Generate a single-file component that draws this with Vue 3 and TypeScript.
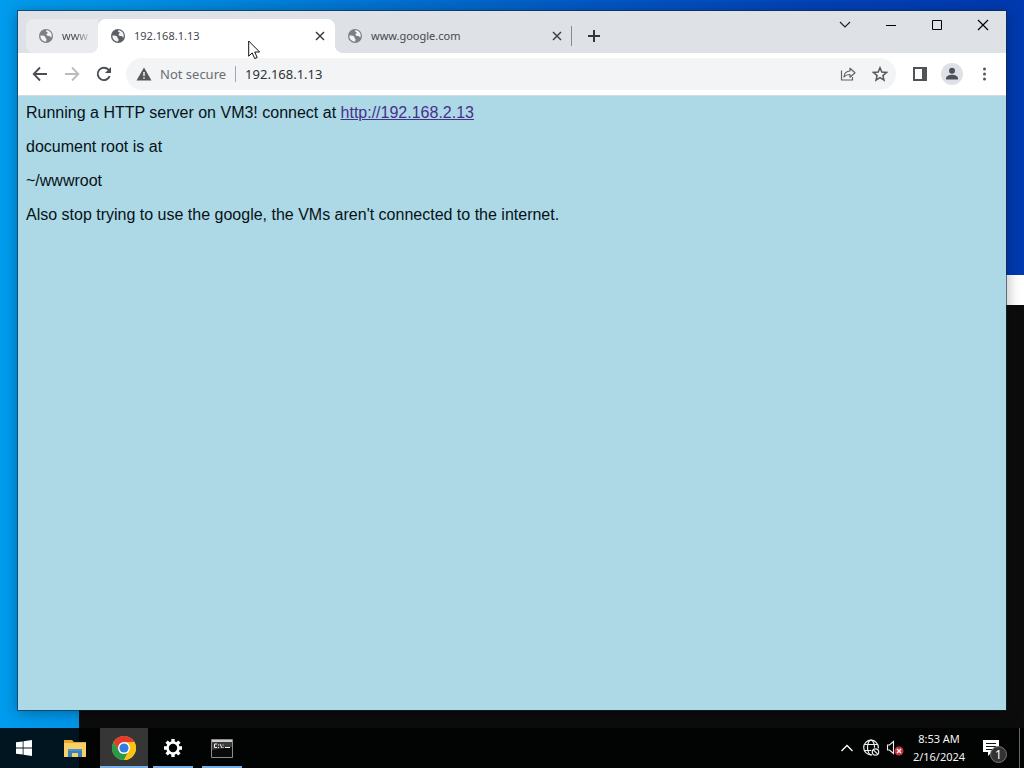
<script setup lang="ts">
import { ref } from 'vue'

interface Tab {
  id: string
  title: string
  kind: 'pinned' | 'active' | 'idle'
}

const tabs: Tab[] = [
  { id: 'a', title: 'www', kind: 'pinned' },
  { id: 'b', title: '192.168.1.13', kind: 'active' },
  { id: 'c', title: 'www.google.com', kind: 'idle' },
]
const address = ref('192.168.1.13')
</script>

<template>
  <div class="screen">
    <main class="desktop">
      <section class="terminal" aria-label="Terminal">
        <div class="terminal-title"></div>
      </section>

      <section class="browser" aria-label="Browser">
        <header class="tabstrip">
          <div class="tabs">
            <div v-for="tab in tabs" :key="tab.id" class="tab" :class="tab.kind">
              <svg class="globe" viewBox="0 0 16 16" width="16" height="16" aria-hidden="true">
                <circle cx="8" cy="8" r="7" fill="currentColor" />
                <path class="land" d="M2.400 7.600c1.800-.2 3.500 0 4.400.7.900.8.3 1.700 1.200 2.100.8.4.6 1.500.1 3.200-3.400.1-5.900-2.400-5.700-6zM8.700 2.300c2 .2 3.800 1.600 4.600 3.300.5 1.300.5 2.800.1 4-.9-.1-1.100-1.300-2-1.500-1.200-.2-3-.4-2.900-1.700.1-.9 1.300-.8 1.200-1.700-.1-.7-1.300-.5-1.700-1.100-.2-.4.1-1.100.7-1.300z" />
              </svg>
              <span class="tab-title">{{ tab.title }}</span>
              <button v-if="tab.kind !== 'pinned'" class="tab-close" aria-label="Close tab">
                <svg viewBox="0 0 10 10" width="10" height="10"><path d="M1 1l8 8M9 1L1 9" stroke="currentColor" stroke-width="1.500" fill="none" /></svg>
              </button>
            </div>
            <button class="new-tab" aria-label="New tab">
              <svg viewBox="0 0 14 14" width="14" height="14"><path d="M7 1v12M1 7h12" stroke="#333639" stroke-width="2" /></svg>
            </button>
          </div>
          <div class="window-buttons">
            <button aria-label="Search tabs"><svg viewBox="0 0 12 12" width="12" height="12"><path d="M1 3l5 5 5-5" fill="none" stroke="#222" stroke-width="1.200" /></svg></button>
            <button aria-label="Minimize"><svg viewBox="0 0 12 12" width="12" height="12"><path d="M1 6.500h10" stroke="#000" /></svg></button>
            <button aria-label="Maximize"><svg viewBox="0 0 12 12" width="12" height="12"><path d="M1.500 1.500h9v9h-9z" fill="none" stroke="#000" /></svg></button>
            <button aria-label="Close"><svg viewBox="0 0 12 12" width="12" height="12"><path d="M1 1l10 10M11 1L1 11" fill="none" stroke="#000" stroke-width="1.200" /></svg></button>
          </div>
        </header>

        <div class="toolbar">
          <button class="tool" aria-label="Back"><svg viewBox="0 0 16 16" width="16" height="16"><path d="M15 8H2M8 1.500L1.700 8 8 14.500" fill="none" stroke="#4b4f53" stroke-width="1.800" /></svg></button>
          <button class="tool" aria-label="Forward"><svg viewBox="0 0 16 16" width="16" height="16"><path d="M1 8h13M8 1.500L14.300 8 8 14.500" fill="none" stroke="#b9bbbe" stroke-width="1.800" /></svg></button>
          <button class="tool" aria-label="Reload"><svg viewBox="0 0 16 16" width="16" height="16"><path d="M13.700 10.200A6.200 6.200 0 1 1 12.500 3.700L14 5.200" fill="none" stroke="#4b4f53" stroke-width="1.900" /><path d="M15 1v6H9z" fill="#4b4f53" /></svg></button>
          <div class="omnibox">
            <svg viewBox="0 0 16 14" width="16" height="14" aria-hidden="true"><path d="M8 .5L15.500 13.500H.5z" fill="#54585c" /><path d="M8 5v4M8 10.200v1.600" stroke="#f1f3f4" stroke-width="1.500" /></svg>
            <span class="insecure">Not secure</span>
            <input v-model="address" class="address" type="text" aria-label="Address" />
            <button class="tool" aria-label="Share"><svg viewBox="0 0 16 16" width="16" height="16"><path d="M1.500 4.500v9.500h11v-3" fill="none" stroke="#5f6368" stroke-width="1.200" /><path d="M4 11c.3-4 2.600-5.900 6-6V2.200L15 6.700l-5 4.500V8.500C7.400 8.400 5.400 9.200 4 11z" fill="none" stroke="#5f6368" stroke-width="1.200" stroke-linejoin="round" /></svg></button>
            <button class="tool" aria-label="Bookmark"><svg viewBox="0 0 16 16" width="16" height="16"><path d="M8 1.800l1.800 4.300 4.700.4-3.600 3.100 1.100 4.600L8 11.700l-4 2.500 1.100-4.600L1.500 6.500l4.700-.4z" fill="none" stroke="#54585c" stroke-width="1.500" /></svg></button>
          </div>
          <button class="tool" aria-label="Side panel"><svg viewBox="0 0 16 16" width="16" height="16"><path d="M2 2h12v12H2z" fill="none" stroke="#505458" stroke-width="2" /><path d="M10 2h5v12h-5z" fill="#505458" /></svg></button>
          <button class="tool" aria-label="Profile"><svg viewBox="0 0 22 22" width="22" height="22"><circle cx="11" cy="11" r="11" fill="#dfe1e6" /><circle cx="11" cy="7.800" r="3" fill="#4d525a" /><path d="M5 16.500v-1.200c0-2.200 3.200-3.500 6-3.500s6 1.300 6 3.500v1.200z" fill="#4d525a" /></svg></button>
          <button class="tool" aria-label="Menu"><svg viewBox="0 0 16 16" width="16" height="16"><circle cx="8.500" cy="3" r="1.500" fill="#54585c" /><circle cx="8.500" cy="8" r="1.500" fill="#54585c" /><circle cx="8.500" cy="13" r="1.500" fill="#54585c" /></svg></button>
        </div>

        <article class="page">
          <p>Running a HTTP server on VM3! connect at <a href="http://192.168.2.13">http://192.168.2.13</a></p>
          <p>document root is at</p>
          <p>~/wwwroot</p>
          <p>Also stop trying to use the google, the VMs aren't connected to the internet.</p>
        </article>
      </section>

      <svg class="cursor" viewBox="0 0 13 20" width="13" height="20" aria-hidden="true">
        <path d="M.7 1v15.200l3.500-3.300 2.500 5.700 2.500-1.100-2.500-5.500h4.900z" fill="#fff" stroke="#111" />
      </svg>
    </main>

    <footer class="taskbar">
      <button class="start" aria-label="Start">
        <svg viewBox="0 0 16 16" width="16" height="16"><path d="M0 2.300L6.700 1.400v6.200H0zM7.500 1.300L16 0v7.600H7.500zM0 8.400h6.700v6.200L0 13.700zM7.500 8.400H16V16l-8.500-1.200z" fill="#fff" /></svg>
      </button>
      <button class="task" aria-label="File Explorer">
        <svg viewBox="0 0 22 19" width="22" height="19"><path d="M0 1h8l2 2h12v14H0z" fill="#e8a92e" /><path d="M0 4h22v14H0z" fill="#f8d069" /><path d="M4 10h14v8h-4v-4H8v4H4z" fill="#3a80be" /><path d="M4 10h14v2H4z" fill="#4a92cc" /></svg>
      </button>
      <button class="task current" aria-label="Chrome">
        <svg viewBox="0 0 24 24" width="24" height="24"><circle cx="12" cy="12" r="12" fill="#fbc116" /><path d="M12 12L6.800 15 1.600 6A12 12 0 0 1 22.400 6H12z" fill="#e33b2e" /><path d="M1.600 6l5.200 9A6 6 0 0 0 12 18l3.500-1.200L12 24A12 12 0 0 1 1.600 6z" fill="#26994a" /><path d="M22.400 6H12a6 6 0 0 1 5.200 9L12 24A12 12 0 0 0 22.400 6z" fill="#fbc116" /><circle cx="12" cy="12" r="6" fill="#fff" /><circle cx="12" cy="12" r="4.600" fill="#2f7de0" /></svg>
      </button>
      <button class="task running" aria-label="Settings">
        <svg viewBox="0 0 20 20" width="20" height="20"><circle cx="10" cy="10" r="5.500" fill="none" stroke="#fff" stroke-width="2.600" /><g stroke="#fff" stroke-width="3.400"><path d="M10 1v3M10 16v3M1 10h3M16 10h3M3.600 3.600l2.200 2.200M14.200 14.200l2.200 2.200M3.600 16.400l2.200-2.200M14.200 5.800l2.200-2.200" /></g></svg>
      </button>
      <button class="task running" aria-label="Command Prompt">
        <svg viewBox="0 0 22 19" width="22" height="19"><path d="M.5 .5h21v18H.5z" fill="#0b0b0b" stroke="#8d8d8d" /><path d="M1 1h20v2H1z" fill="#cfcfcf" /><path d="M1 3h20v5L1 11z" fill="#3b3b3b" /><path d="M6 5H3.500v3.500H6M7.500 5.500v1M7.500 8v1M9 5l2 4M12 5.500v1M12 8v1M14 8.500h5" fill="none" stroke="#f2f2f2" /></svg>
      </button>

      <div class="tray">
        <button class="tray-icon" aria-label="Show hidden icons"><svg viewBox="0 0 14 10" width="14" height="10"><path d="M1.500 8L7 2.500 12.500 8" fill="none" stroke="#fff" stroke-width="1.300" /></svg></button>
        <button class="tray-icon" aria-label="Network"><svg viewBox="0 0 18 18" width="18" height="18"><g fill="none" stroke="#eee" stroke-width="1.200"><circle cx="9" cy="8.500" r="7.300" /><ellipse cx="9" cy="8.500" rx="3.500" ry="7.300" /><path d="M2.500 5.500h13M2.500 11.500h13" /></g><circle cx="13.500" cy="13" r="4.500" fill="#050505" /><circle cx="13.500" cy="13" r="3.200" fill="none" stroke="#eee" stroke-width="1.200" /><path d="M11.300 10.800l4.400 4.400" stroke="#eee" stroke-width="1.200" /></svg></button>
        <button class="tray-icon" aria-label="Volume muted"><svg viewBox="0 0 18 18" width="18" height="18"><path d="M1.500 6h2l4-3.500v12l-4-3.500h-2z" fill="none" stroke="#eee" stroke-width="1.100" /><circle cx="13" cy="12" r="4.500" fill="#c8323c" /><path d="M11 10l4 4M15 10l-4 4" stroke="#fff" stroke-width="1.200" /></svg></button>
        <button class="clock"><span>8:53 AM</span><span>2/16/2024</span></button>
        <button class="notices" aria-label="Notifications">
          <svg viewBox="0 0 16 16" width="16" height="16"><path d="M0 0h16v12H9l-4 4v-4H0z" fill="#fff" /><path d="M3 3.500h10M3 6.500h10M3 9.500h6" stroke="#111" /></svg>
          <span class="count">1</span>
        </button>
        <button class="peek" aria-label="Show desktop"></button>
      </div>
    </footer>
  </div>
</template>

<style>
html,
body {
  margin: 0;
  overflow: hidden;
}
</style>

<style scoped>
.screen {
  display: flex;
  flex-direction: column;
  height: 100vh;
  font-family: "Noto Sans", "Open Sans", sans-serif;
  background: linear-gradient(90deg, #009cee 0%, #0092e6 12%, #007cd8 30%, #0058c4 58%, #0042b8 80%, #0039b0 100%);
}
button {
  display: flex;
  align-items: center;
  justify-content: center;
  flex: none;
  margin: 0;
  padding: 0;
  border: 0;
  background: none;
  font-family: inherit;
}
svg {
  display: block;
  flex: none;
}
.desktop {
  position: relative;
  flex: 1;
  min-height: 0;
}
.terminal {
  position: absolute;
  inset: 275px 0 0 79px;
  background: #0c0c0c;
}
.terminal-title {
  height: 30px;
  background: #fff;
}
.browser {
  position: absolute;
  inset: 11px 18px 18px;
  display: flex;
  flex-direction: column;
  background: #add8e6;
  box-shadow: 0 0 0 1px rgba(20, 40, 60, 0.6), 0 2px 14px rgba(0, 0, 0, 0.35);
}
.tabstrip {
  display: flex;
  justify-content: space-between;
  height: 42px;
  background: #dee1e6;
}
.tabs {
  display: flex;
  align-items: flex-end;
  min-width: 0;
  padding-left: 8px;
}
.tab {
  position: relative;
  display: flex;
  align-items: center;
  gap: 8px;
  height: 34px;
  box-sizing: border-box;
  padding: 0 10px 0 12px;
  color: #5f6368;
}
.tab.pinned {
  width: 72px;
  border-radius: 8px 0 0 8px;
  background: #e9ebee;
}
.tab.active {
  width: 237px;
  border-radius: 8px 8px 0 0;
  background: #fff;
  z-index: 1;
}
.tab.active::before,
.tab.active::after {
  content: "";
  position: absolute;
  bottom: 0;
  width: 8px;
  height: 8px;
}
.tab.active::before {
  right: 100%;
  background: radial-gradient(circle at 0 0, transparent 8px, #fff 8px);
}
.tab.active::after {
  left: 100%;
  background: radial-gradient(circle at 100% 0, transparent 8px, #fff 8px);
}
.tab.idle {
  width: 237px;
}
.tab.idle::after {
  content: "";
  position: absolute;
  right: 0;
  top: 7px;
  width: 1px;
  height: 20px;
  background: #85888c;
}
.globe {
  color: #5b5f63;
}
.pinned .globe,
.idle .globe {
  color: #7c8084;
}
.land {
  fill: #f1f3f4;
}
.tab-title {
  flex: 1;
  white-space: nowrap;
  font-size: 11px;
  line-height: 16px;
  color: #45494d;
}
.pinned .tab-title {
  mask-image: linear-gradient(90deg, #000 50%, rgba(0, 0, 0, 0.25));
}
.tab-close {
  width: 10px;
  height: 16px;
  color: #3c4043;
}
.new-tab {
  width: 28px;
  height: 34px;
  margin-left: 8px;
}
.window-buttons {
  display: flex;
  flex: none;
}
.window-buttons button {
  width: 46px;
  height: 28px;
}
.toolbar {
  display: flex;
  align-items: center;
  height: 42px;
  padding: 0 6px;
  background: #fff;
  border-bottom: 1px solid #d5dcdf;
}
.tool {
  width: 32px;
  height: 32px;
}
.omnibox {
  display: flex;
  align-items: center;
  flex: 1;
  min-width: 0;
  height: 32px;
  margin: 0 8px 0 6px;
  padding-left: 10px;
  border-radius: 16px;
  background: #f3f4f5;
}
.insecure {
  margin-left: 8px;
  padding-right: 9px;
  border-right: 1px solid #a5a8ab;
  font-size: 13px;
  line-height: 16px;
  color: #6a6e72;
  white-space: nowrap;
}
.address {
  flex: 1;
  min-width: 0;
  margin-left: 9px;
  padding: 0;
  border: 0;
  outline: 0;
  background: none;
  font-family: inherit;
  font-size: 13px;
  color: #2f3235;
}
.page {
  flex: 1;
  padding: 8px;
  font-family: "Liberation Sans", Arial, sans-serif;
  font-size: 16px;
  line-height: 18px;
  color: #061216;
}
.page p {
  margin: 0 0 16px;
}
.page a {
  color: #47308a;
}
.cursor {
  position: absolute;
  left: 248px;
  top: 40px;
  z-index: 10;
}
.taskbar {
  display: flex;
  flex: none;
  gap: 1px;
  height: 40px;
  background: linear-gradient(90deg, #00151f 0 79px, #020303 79px);
}
.start {
  width: 50px;
  padding-right: 2px;
}
.task {
  width: 48px;
  position: relative;
}
.current {
  background: #363636;
}
.current::after,
.running::after {
  content: "";
  position: absolute;
  bottom: 0;
  left: 4px;
  right: 4px;
  height: 2px;
  background: #76b0e6;
}
.current::after {
  left: 0;
  right: 0;
}
.tray {
  display: flex;
  margin-left: auto;
}
.tray-icon {
  width: 24px;
}
.clock {
  flex-direction: column;
  width: 64px;
  font-size: 11px;
  line-height: 18px;
  color: #f4f4f4;
}
.notices {
  position: relative;
  width: 48px;
  padding-right: 8px;
}
.count {
  position: absolute;
  left: 19px;
  top: 18px;
  width: 15px;
  height: 15px;
  border: 1px solid #777;
  border-radius: 50%;
  background: #333;
  color: #fff;
  font-size: 12px;
  line-height: 15px;
  text-align: center;
}
.peek {
  width: 5px;
  border-left: 1px solid #666;
}
</style>
